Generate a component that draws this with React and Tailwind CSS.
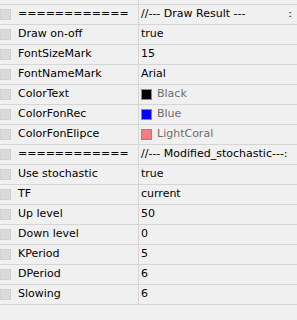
import React from 'react'

const rows = [
  { name: 'Magic', value: '0' },
  { name: '============', value: '//--- Draw Result ---', tail: ':' },
  { name: 'Draw on-off', value: 'true' },
  { name: 'FontSizeMark', value: '15' },
  { name: 'FontNameMark', value: 'Arial' },
  { name: 'ColorText', value: 'Black', swatch: 'bg-[#000000]' },
  { name: 'ColorFonRec', value: 'Blue', swatch: 'bg-[#0000ff]' },
  { name: 'ColorFonElipce', value: 'LightCoral', swatch: 'bg-[#f08080]' },
  { name: '============', value: '//--- Modified_stochastic---:' },
  { name: 'Use stochastic', value: 'true' },
  { name: 'TF', value: 'current' },
  { name: 'Up level', value: '50' },
  { name: 'Down level', value: '0' },
  { name: 'KPeriod', value: '5' },
  { name: 'DPeriod', value: '6' },
  { name: 'Slowing', value: '6' },
]

const Row = ({ row }) => (
  <div className="flex h-[20px] border-b border-[#d5d5d5]">
    <div className="flex items-center w-[139px] shrink-0 border-r border-[#d5d5d5]">
      <div className="w-[11px] h-[11px] bg-[#dadada] border border-[#d0d0d0] shrink-0" />
      <span className="ml-[7px] whitespace-nowrap text-black">{row.name}</span>
    </div>
    <div className="flex flex-1 items-center pl-[2px] pr-[5px] overflow-hidden whitespace-nowrap">
      {row.swatch ? (
        <>
          <div className="w-[11px] h-[11px] border border-[#8a8a8a] flex items-center justify-center shrink-0">
            <div className={`w-[9px] h-[9px] ${row.swatch}`} />
          </div>
          <span className="ml-[5px] text-[#6d6d6d]">{row.value}</span>
        </>
      ) : (
        <>
          <span className="text-black">{row.value}</span>
          {row.tail && <span className="ml-auto text-black">{row.tail}</span>}
        </>
      )}
    </div>
  </div>
)

export default function App() {
  return (
    <div className="w-[297px] h-[320px] overflow-hidden bg-[#f0f0f0] text-[11px] font-['DejaVu_Sans',Tahoma,sans-serif]">
      <div className="mt-[-15px]">
        {rows.map((row, i) => (
          <Row key={i} row={row} />
        ))}
      </div>
    </div>
  )
}
